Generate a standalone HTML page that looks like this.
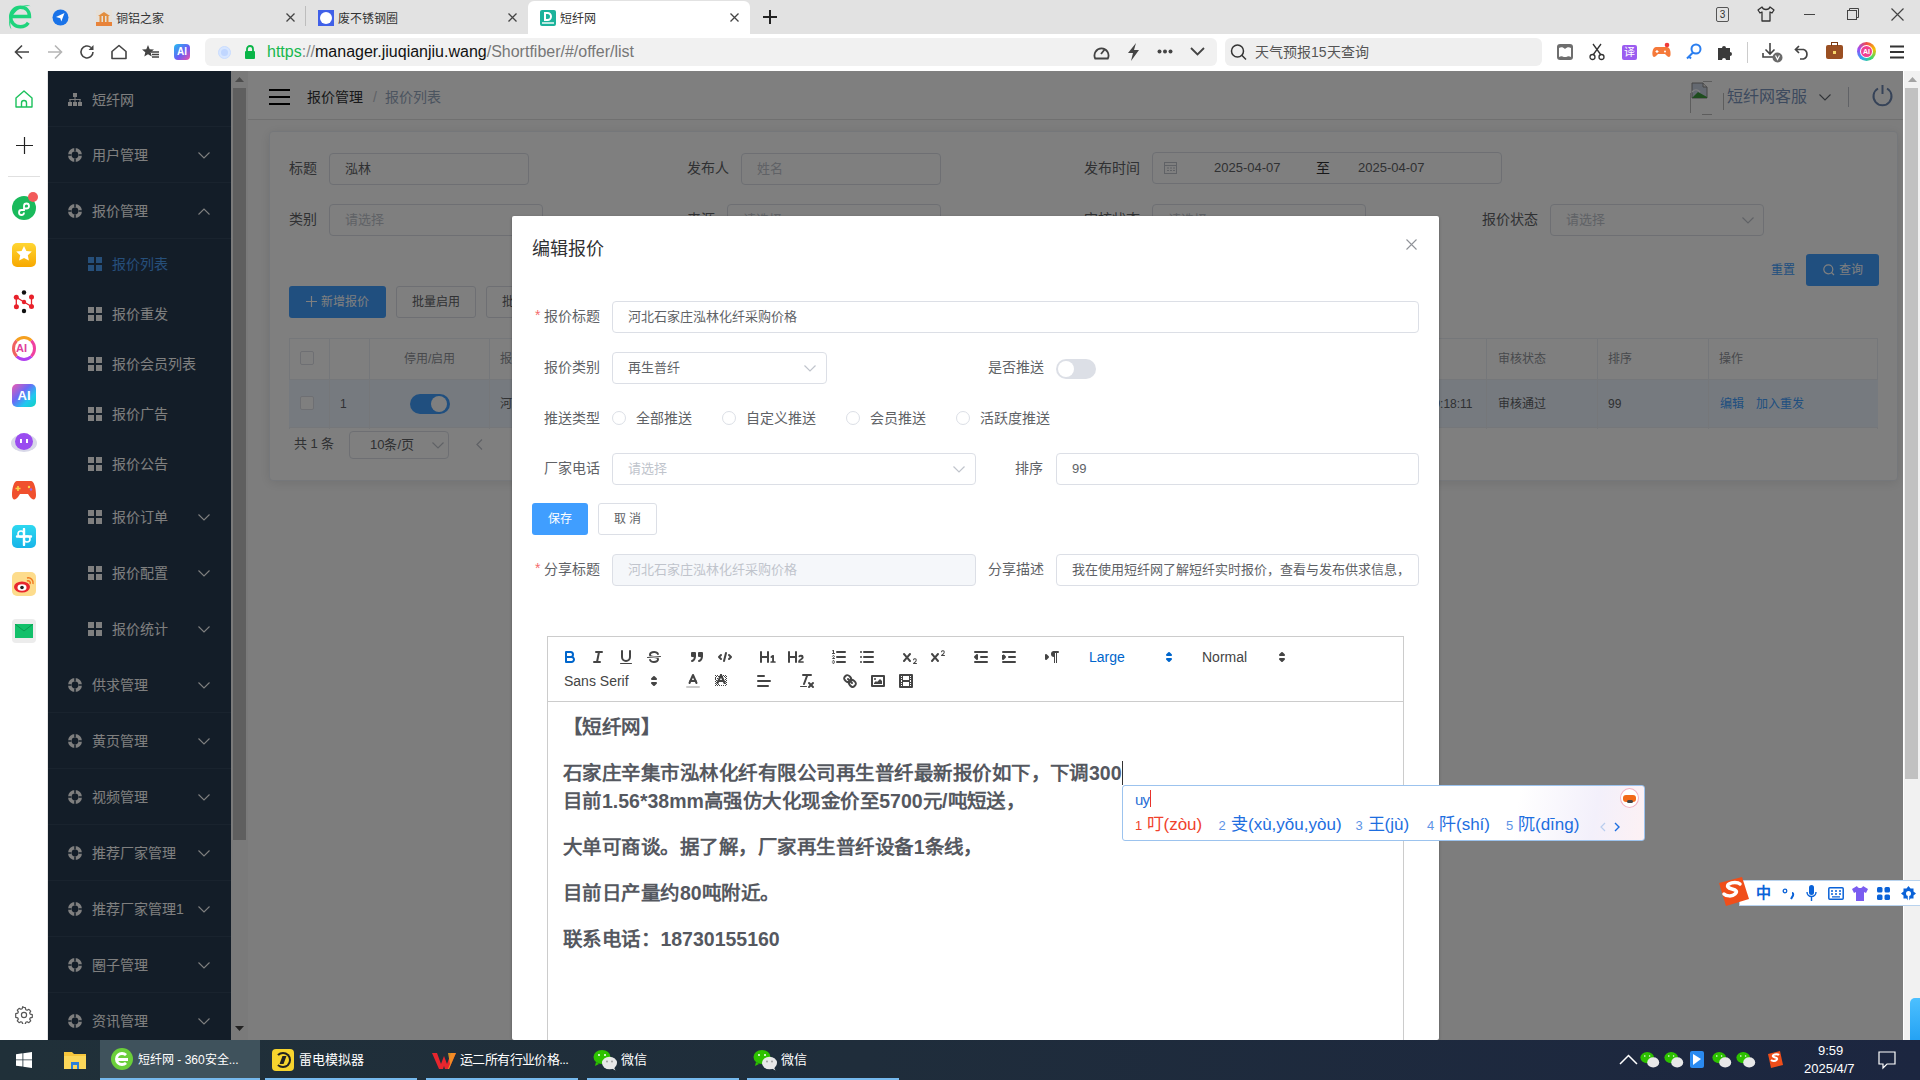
<!DOCTYPE html>
<html lang="zh-CN"><head><meta charset="utf-8">
<style>
*{box-sizing:border-box;margin:0;padding:0}
html,body{width:1920px;height:1080px;overflow:hidden;font-family:"Liberation Sans",sans-serif;background:#fff;position:relative}
.a{position:absolute}
/* tab bar */
#tabbar{left:0;top:0;width:1920px;height:34px;background:#e2e2e2}
.tab{top:3px;height:33px;font-size:13px;color:#333;line-height:33px}
#navbar{left:0;top:34px;width:1920px;height:37px;background:#fff}
#bside{left:0;top:71px;width:48px;height:969px;background:#fff}
#app{left:48px;top:71px;width:1855px;height:969px;background:#f0f2f5;overflow:hidden}
#aside{left:0;top:0;width:183px;height:969px;background:#263a50}
.ed{font-size:19.5px;line-height:28px;font-weight:bold;color:#55585f;white-space:nowrap;letter-spacing:-0.52px}
.mtxt{font-size:14px;line-height:20px;white-space:nowrap}
#asidescroll{left:183px;top:0;width:17px;height:969px;background:#f4f4f4}
#overlay{left:0;top:0;width:1855px;height:969px;background:rgba(0,0,0,.5)}
#pscroll{left:1903px;top:71px;width:17px;height:969px;background:#f1f1f1;border-left:1px solid #fff}
#modal{left:512px;top:216px;width:927px;height:824px;background:#fff;border-radius:2px;box-shadow:0 1px 3px rgba(0,0,0,.3);overflow:hidden}
#taskbar{left:0;top:1040px;width:1920px;height:40px;background:linear-gradient(90deg,#203039 0%,#1f2d3b 45%,#1c2640 100%)}
</style></head><body>
<div id="tabbar" class="a">
  <svg class="a" style="left:4px;top:3px" width="28" height="28" viewBox="0 0 28 28"><path d="M7 13.5h18.5c0-6-3.8-9.3-9-9.3-5.6 0-9.8 4-9.8 9.8 0 5.8 4 9.7 9.7 9.7 3.6 0 6.3-1.6 7.9-4" fill="none" stroke="#1ed47c" stroke-width="3.4"/><path d="M7.5 26.5C3 22 5 11 13 5.5 18 2 24 1.5 26.5 3.2 22.5 2.5 17 4 12.5 8 6.5 13.5 5 21 7.5 26.5z" fill="#1ed47c"/></svg>
  <svg class="a" style="left:52px;top:9px" width="17" height="17" viewBox="0 0 17 17"><circle cx="8.5" cy="8.5" r="8" fill="#1a73e8"/><path d="M4 8l8.5-4-3.2 8.5-1-3.3z" fill="#fff"/></svg>
  <div class="a" style="left:96px;top:10px;width:16px;height:16px;background:#e6e0d8"><svg width="16" height="16" viewBox="0 0 16 16"><path d="M2 6l6-4 6 4z" fill="#e38d3c"/><rect x="3.5" y="6" width="2" height="6" fill="#e38d3c"/><rect x="7" y="6" width="2" height="6" fill="#e38d3c"/><rect x="10.5" y="6" width="2" height="6" fill="#e38d3c"/><rect x="0" y="12" width="16" height="4" fill="#e8833a"/></svg></div>
  <div class="a tab" style="left:116px;font-size:12px;color:#333">铜铝之家</div>
  <svg class="a" style="left:286px;top:13px" width="9" height="9" viewBox="0 0 9 9"><path d="M.5.5l8 8M8.5.5l-8 8" stroke="#444" stroke-width="1.3"/></svg>
  <div class="a" style="left:305px;top:6px;width:1px;height:20px;background:#bdbdbd"></div>
  <div class="a" style="left:318px;top:10px;width:16px;height:16px;background:#4060e8"><div class="a" style="left:2px;top:2px;width:12px;height:12px;border-radius:50%;background:#fff"></div></div>
  <div class="a tab" style="left:338px;font-size:12px;color:#333">废不锈钢圈</div>
  <svg class="a" style="left:508px;top:13px" width="9" height="9" viewBox="0 0 9 9"><path d="M.5.5l8 8M8.5.5l-8 8" stroke="#444" stroke-width="1.3"/></svg>
  <div class="a" style="left:528px;top:1px;width:222px;height:34px;background:#fff;border-radius:6px 6px 0 0"></div>
  <div class="a" style="left:540px;top:10px;width:16px;height:16px;background:#1cb39b;border-radius:2px"><div class="a" style="left:4px;top:2px;width:8px;height:9px;border:2px solid #fff;border-radius:0 5px 5px 0"></div><div class="a" style="left:2px;top:12px;width:12px;height:2px;background:#fff;opacity:.7"></div></div>
  <div class="a tab" style="left:560px;font-size:12px;color:#333">短纤网</div>
  <svg class="a" style="left:730px;top:13px" width="9" height="9" viewBox="0 0 9 9"><path d="M.5.5l8 8M8.5.5l-8 8" stroke="#444" stroke-width="1.3"/></svg>
  <svg class="a" style="left:763px;top:10px" width="14" height="14" viewBox="0 0 14 14"><path d="M7 0v14M0 7h14" stroke="#222" stroke-width="2"/></svg>
  <div class="a" style="left:1716px;top:7px;width:13px;height:15px;border:1px solid #555;border-radius:2px;font-size:10px;line-height:13px;text-align:center;color:#333">3</div>
  <svg class="a" style="left:1757px;top:6px" width="18" height="16" viewBox="0 0 18 16"><path d="M5 1L1 4l2 3 2-1v9h8V6l2 1 2-3-4-3c-.5 1.5-2 2.5-4 2.5S5.5 2.5 5 1z" fill="none" stroke="#333" stroke-width="1.3" stroke-linejoin="round"/></svg>
  <div class="a" style="left:1804px;top:14px;width:11px;height:1px;background:#444"></div>
  <svg class="a" style="left:1847px;top:8px" width="12" height="12" viewBox="0 0 12 12"><rect x=".5" y="2.5" width="9" height="9" fill="none" stroke="#444"/><path d="M2.5 2.5V.5h9v9h-2" fill="none" stroke="#444"/></svg>
  <svg class="a" style="left:1891px;top:8px" width="13" height="13" viewBox="0 0 13 13"><path d="M.5.5l12 12M12.5.5l-12 12" stroke="#444" stroke-width="1.2"/></svg>
</div>
<div id="navbar" class="a">
  <svg class="a" style="left:14px;top:10px" width="16" height="16" viewBox="0 0 16 16"><path d="M15 8H1.5M8 1.5L1.5 8 8 14.5" fill="none" stroke="#444" stroke-width="1.6"/></svg>
  <svg class="a" style="left:47px;top:10px" width="16" height="16" viewBox="0 0 16 16"><path d="M1 8h13.5M8 1.5L14.5 8 8 14.5" fill="none" stroke="#b5b5b5" stroke-width="1.6"/></svg>
  <svg class="a" style="left:79px;top:10px" width="16" height="16" viewBox="0 0 16 16"><path d="M14 8a6 6 0 1 1-2-4.5" fill="none" stroke="#444" stroke-width="1.6"/><path d="M14.5 1v5h-5z" fill="#444"/></svg>
  <svg class="a" style="left:111px;top:10px" width="16" height="16" viewBox="0 0 16 16"><path d="M1 7.5L8 1.5l7 6V14.5H1z" fill="none" stroke="#444" stroke-width="1.6" stroke-linejoin="round"/></svg>
  <svg class="a" style="left:142px;top:10px" width="18" height="16" viewBox="0 0 18 16"><path d="M6 1l1.7 4.2 4.3.3-3.3 2.8 1 4.3L6 10.3 2.3 12.6l1-4.3L0 5.5l4.3-.3z" fill="#444"/><path d="M9 8h8M10 10.5h7M10 13h7" stroke="#444" stroke-width="1.4"/></svg>
  <div class="a" style="left:174px;top:10px;width:16px;height:16px;border-radius:4px;background:linear-gradient(135deg,#22c0f0,#6a5cf5 55%,#f04fa8);color:#fff;font-weight:bold;font-size:10px;line-height:16px;text-align:center">AI</div>
  <div class="a" style="left:205px;top:4px;width:1012px;height:28px;background:#f1f1f1;border-radius:6px"></div>
  <div class="a" style="left:218px;top:12px;width:13px;height:13px;border-radius:50%;border:1px solid #c9dcff;background:#d7e6ff"><div class="a" style="left:2px;top:2px;width:7px;height:7px;border-radius:50%;background:#c0d6ff"></div></div>
  <svg class="a" style="left:244px;top:11px" width="12" height="14" viewBox="0 0 12 14"><path d="M3 6V4a3 3 0 0 1 6 0v2" fill="none" stroke="#0ab548" stroke-width="1.8"/><rect x="1" y="6" width="10" height="8" rx="1" fill="#0ab548"/></svg>
  <div class="a" style="left:267px;top:8px;font-size:16px;line-height:20px;color:#333;white-space:nowrap"><span style="color:#17b84e">https</span><span style="color:#888">://</span><span style="color:#111">manager.jiuqianjiu.wang</span><span style="color:#777">/Shortfiber/#/offer/list</span></div>
  <svg class="a" style="left:1093px;top:10px" width="17" height="16" viewBox="0 0 17 16"><path d="M2.2 14.5A7 7 0 1 1 14.8 14.5z" fill="none" stroke="#444" stroke-width="1.8" stroke-linejoin="round"/><path d="M8 10l4-5" stroke="#444" stroke-width="1.8"/></svg>
  <svg class="a" style="left:1127px;top:9px" width="13" height="18" viewBox="0 0 13 18"><path d="M9 0L1 10h5l-2 8 8-11H7z" fill="#444"/></svg>
  <svg class="a" style="left:1157px;top:15px" width="16" height="5" viewBox="0 0 16 5"><circle cx="2.5" cy="2.5" r="2" fill="#444"/><circle cx="8" cy="2.5" r="2" fill="#444"/><circle cx="13.5" cy="2.5" r="2" fill="#444"/></svg>
  <svg class="a" style="left:1190px;top:13px" width="15" height="9" viewBox="0 0 15 9"><path d="M1 1l6.5 6.5L14 1" fill="none" stroke="#444" stroke-width="1.8"/></svg>
  <div class="a" style="left:1225px;top:4px;width:317px;height:28px;background:#efefef;border-radius:6px"></div>
  <svg class="a" style="left:1229px;top:9px" width="19" height="19" viewBox="0 0 19 19"><circle cx="8.5" cy="8" r="6" fill="none" stroke="#333" stroke-width="1.5"/><path d="M12.8 12.3L17 16.5" stroke="#333" stroke-width="1.5"/></svg>
  <div class="a" style="left:1255px;top:8px;font-size:14px;line-height:20px;color:#555;white-space:nowrap">天气预报15天查询</div>
  <div class="a" style="left:1557px;top:10px;width:16px;height:16px;border-radius:3px;background:#6e6e6e"><svg class="a" style="left:2px;top:3px" width="12" height="10" viewBox="0 0 12 10"><path d="M0 1c2-1 4-1 6 1 2-2 4-2 6-1v9c-2-1-4-1-6 1-2-2-4-2-6-1z" fill="#fff"/></svg></div>
  <svg class="a" style="left:1589px;top:9px" width="16" height="18" viewBox="0 0 16 18"><path d="M4 1l8 11M12 1L4 12" stroke="#333" stroke-width="1.3"/><circle cx="3.5" cy="14" r="2.5" fill="none" stroke="#333" stroke-width="1.3"/><circle cx="12.5" cy="14" r="2.5" fill="none" stroke="#333" stroke-width="1.3"/></svg>
  <div class="a" style="left:1622px;top:11px;width:15px;height:15px;border-radius:2px;background:#9b5cf0;color:#fff;font-size:11px;line-height:15px;text-align:center">译</div>
  <svg class="a" style="left:1652px;top:8px" width="19" height="18" viewBox="0 0 19 18"><path d="M4 5h11c2.5 0 4 4 3.5 8-.3 2.5-2.5 2.5-4 .5L13 12H6l-1.5 1.5c-1.5 2-3.7 2-4-.5C0 9 1.5 5 4 5z" fill="#f5793a"/><circle cx="15" cy="3" r="2.3" fill="#f03a3a"/><path d="M5 8v3M3.5 9.5h3" stroke="#fff" stroke-width="1.2"/><circle cx="13" cy="9.5" r="1" fill="#fff"/></svg>
  <svg class="a" style="left:1686px;top:9px" width="16" height="17" viewBox="0 0 16 17"><circle cx="10" cy="6" r="4.5" fill="none" stroke="#2a7ef0" stroke-width="2"/><path d="M7 9.5L1 15.5M3 13.5l2 2" stroke="#2a7ef0" stroke-width="2"/></svg>
  <svg class="a" style="left:1717px;top:10px" width="16" height="16" viewBox="0 0 16 16"><path d="M1 4h4a2 2 0 1 1 4 0h4v4a2 2 0 1 1 0 4v4H9a2 2 0 1 0-4 0H1z" fill="#3a3a3a"/></svg>
  <div class="a" style="left:1747px;top:8px;width:1px;height:21px;background:#ccc"></div>
  <svg class="a" style="left:1762px;top:8px" width="22" height="22" viewBox="0 0 22 22"><path d="M8 1v11M3.5 7.5L8 12l4.5-4.5M1 11v4h12" fill="none" stroke="#444" stroke-width="1.6"/><circle cx="15.5" cy="15.5" r="5" fill="#6a6a6a"/><path d="M13.5 13.5l2 4 2-4" fill="none" stroke="#fff" stroke-width="1.2"/></svg>
  <svg class="a" style="left:1794px;top:10px" width="16" height="16" viewBox="0 0 16 16"><path d="M5 2L1.5 5.5 5 9M1.5 5.5h8a5 5 0 0 1 0 9.5H6" fill="none" stroke="#444" stroke-width="1.7"/></svg>
  <div class="a" style="left:1826px;top:11px;width:17px;height:14px;border-radius:2px;background:#9a4f22"><div class="a" style="left:5px;top:-3px;width:7px;height:4px;border:1.5px solid #7a3a12;border-bottom:none"></div><div class="a" style="left:7px;top:6px;width:3px;height:3px;background:#f7d56a"></div></div>
  <div class="a" style="left:1857px;top:8px;width:19px;height:19px;border-radius:50%;background:conic-gradient(#f24b4b,#f5c000,#3ad96f,#2aa6f5,#a04bf5,#f24b4b)"><div class="a" style="left:3px;top:3px;width:13px;height:13px;border-radius:50%;background:#fff"></div><div class="a" style="left:4px;top:4px;width:11px;height:11px;border-radius:50%;background:#f04090;color:#fff;font-size:7px;line-height:11px;text-align:center;font-weight:bold">AI</div></div>
  <svg class="a" style="left:1890px;top:11px" width="14" height="14" viewBox="0 0 14 14"><path d="M0 1.5h14M0 7h14M0 12.5h14" stroke="#333" stroke-width="1.8"/></svg>
</div>
<div id="bside" class="a">
  <div class="a" style="left:47px;top:0;width:1px;height:969px;background:#e6e6e6"></div>
  <svg class="a" style="left:15px;top:19px" width="18" height="18" viewBox="0 0 18 18"><path d="M1 8L9 1l8 7v9H1z" fill="none" stroke="#1cc15c" stroke-width="1.4" stroke-linejoin="round"/><path d="M6.5 17v-4a2.5 2.5 0 0 1 5 0v4" fill="none" stroke="#1cc15c" stroke-width="1.4"/></svg>
  <svg class="a" style="left:16px;top:66px" width="17" height="17" viewBox="0 0 17 17"><path d="M8.5 0v17M0 8.5h17" stroke="#222" stroke-width="1.2"/></svg>
  <div class="a" style="left:8px;top:105px;width:32px;height:1px;background:#e0e0e0"></div>
  <div class="a" style="left:12px;top:125px;width:24px;height:24px;border-radius:50%;background:#1aba5c"></div>
  <svg class="a" style="left:15px;top:128px" width="18" height="18" viewBox="0 0 18 18"><path d="M6 12.5a2.5 2.5 0 1 1 -2.5-2.5h2.5v-4a2.5 2.5 0 1 1 2.5 2.5H6" fill="none" stroke="#fff" stroke-width="1.8" transform="translate(3,1)"/></svg>
  <div class="a" style="left:28px;top:121px;width:10px;height:10px;border-radius:50%;background:#f25b5b"></div>
  <div class="a" style="left:12px;top:172px;width:24px;height:24px;border-radius:5px;background:linear-gradient(#ffd633,#f7a800)"></div>
  <svg class="a" style="left:14px;top:173px" width="20" height="20" viewBox="0 0 20 20"><path d="M10 2l2.4 5 5.4.6-4 3.7 1.1 5.3L10 14l-4.9 2.6 1.1-5.3-4-3.7 5.4-.6z" fill="#fff"/></svg>
  <svg class="a" style="left:8px;top:214px" width="32" height="35" viewBox="0 0 32 35"><path d="M8.3 12.3v9.5M23.5 12v9.5M8.3 12.3L16 17l7.5 4.5" fill="none" stroke="#e8202a" stroke-width="1.3"/><circle cx="8.3" cy="12.3" r="2.5" fill="#e8202a"/><circle cx="8.4" cy="21.8" r="2.5" fill="#e8202a"/><circle cx="23.5" cy="12" r="2.5" fill="#e8202a"/><circle cx="23.5" cy="21.5" r="2.5" fill="#e8202a"/><circle cx="16" cy="17" r="2.2" fill="#e8202a"/><circle cx="16" cy="7.5" r="2.2" fill="#111"/><circle cx="16" cy="26" r="2.2" fill="#111"/></svg>
  <div class="a" style="left:12px;top:265px;width:24px;height:25px;border-radius:50%;border:3px solid;border-color:#f5a020 #f040a0 #b040f0 #f06060"></div>
  <div class="a" style="left:16px;top:270px;font-size:11px;font-weight:bold;color:#e0409a;line-height:14px">AI</div>
  <div class="a" style="left:12px;top:313px;width:24px;height:23px;border-radius:5px;background:linear-gradient(135deg,#f05ab0,#6a6af5 40%,#20c8f0 70%,#10d0c0);color:#fff;font-weight:bold;font-size:13px;line-height:23px;text-align:center">AI</div>
  <div class="a" style="left:11px;top:363px;width:26px;height:18px;border-radius:50%;background:#d8d8e8"></div>
  <div class="a" style="left:15px;top:362px;width:18px;height:17px;border-radius:50%;background:#9a4cf0"><div class="a" style="left:5px;top:6px;width:2px;height:4px;background:#fff"></div><div class="a" style="left:11px;top:6px;width:2px;height:4px;background:#fff"></div></div>
  <svg class="a" style="left:12px;top:409px" width="24" height="21" viewBox="0 0 24 21"><path d="M5 1h14c3 0 5 7 5 14 0 5-3 6-6 2l-2-3H8l-2 3c-3 4-6 3-6-2C0 8 2 1 5 1z" fill="#f0502e"/><path d="M6 6v5M3.5 8.5h5" stroke="#fbd34a" stroke-width="1.6"/><circle cx="17" cy="7" r="1.2" fill="#fbd34a"/><circle cx="19" cy="9.5" r="1.2" fill="#9b6cf0"/></svg>
  <div class="a" style="left:12px;top:454px;width:24px;height:23px;border-radius:5px;background:linear-gradient(#2ed8f0,#18b4e8)"></div>
  <svg class="a" style="left:15px;top:457px" width="18" height="18" viewBox="0 0 18 18"><path d="M9 1v16M2 8.5h14" stroke="#fff" stroke-width="2.4" stroke-linecap="round"/><circle cx="6" cy="6" r="3" fill="none" stroke="#fff" stroke-width="1.6"/><circle cx="12" cy="11" r="3" fill="none" stroke="#fff" stroke-width="1.6"/></svg>
  <div class="a" style="left:12px;top:501px;width:24px;height:24px;border-radius:5px;background:#fddc8c"></div>
  <svg class="a" style="left:13px;top:504px" width="22" height="19" viewBox="0 0 22 19"><ellipse cx="9" cy="12" rx="8" ry="5.5" fill="#e8262e"/><ellipse cx="9" cy="12.5" rx="4.5" ry="3.2" fill="#fff"/><circle cx="9" cy="12.5" r="1.8" fill="#222"/><path d="M14 3a5 5 0 0 1 6 6M14 6a2.2 2.2 0 0 1 3 3" fill="none" stroke="#f07820" stroke-width="1.5"/></svg>
  <div class="a" style="left:12px;top:548px;width:24px;height:24px;border-radius:4px;background:#ececec"></div>
  <div class="a" style="left:15px;top:553px;width:18px;height:14px;background:#12c06a"></div>
  <svg class="a" style="left:15px;top:553px" width="18" height="8" viewBox="0 0 18 8"><path d="M0 0l9 7 9-7" fill="none" stroke="#0a9a50" stroke-width="1"/></svg>
  <svg class="a" style="left:15px;top:935px" width="18" height="18" viewBox="0 0 18 18"><path d="M9 1.5l1.3.2.5 2 1.3.6 1.8-1 1.8 1.8-1 1.8.6 1.3 2 .5v2.6l-2 .5-.6 1.3 1 1.8-1.8 1.8-1.8-1-1.3.6-.5 2H7.7l-.5-2-1.3-.6-1.8 1-1.8-1.8 1-1.8-.6-1.3-2-.5V7.7l2-.5.6-1.3-1-1.8 1.8-1.8 1.8 1 1.3-.6.5-2z" fill="none" stroke="#555" stroke-width="1.2" stroke-linejoin="round"/><circle cx="9" cy="9" r="2.6" fill="none" stroke="#555" stroke-width="1.2"/></svg>
</div>
<div id="app" class="a">
  <div class="a" style="left:200px;top:0;width:1655px;height:969px;background:#fbfbfb"></div>
<div class="a" style="left:200px;top:0;width:1655px;height:49px;background:#fff;border-bottom:1px solid #e0e0e0"></div>
<svg class="a" style="left:221px;top:18px" width="21" height="16" viewBox="0 0 21 16"><path d="M0 1h21M0 8h21M0 15h21" stroke="#000" stroke-width="2"/></svg>
<div class="a mtxt" style="left:259px;top:16px;color:#303133">报价管理</div>
<div class="a mtxt" style="left:325px;top:16px;color:#c0c4cc">/</div>
<div class="a mtxt" style="left:337px;top:16px;color:#97a8be">报价列表</div>
<div class="a" style="left:1655px;top:10px;width:9px;height:1px;background:#bbb"></div><div class="a" style="left:1654px;top:43px;width:10px;height:1px;background:#bbb"></div><div class="a" style="left:1642px;top:22px;width:1px;height:20px;background:#bbb"></div><div class="a" style="left:1675px;top:22px;width:1px;height:17px;background:#bbb"></div><svg class="a" style="left:1643px;top:11px" width="18" height="17" viewBox="0 0 18 17"><path d="M1 1h11l4 4v11H1z" fill="#c9d3e3" stroke="#888" stroke-width="1"/><path d="M1 16l6-6 9 5v1z" fill="#3c9a3c"/><path d="M1 10c3-3 5-3 8 0" fill="none" stroke="#fff" stroke-width="1.2"/><path d="M12 1v4h4" fill="#eee" stroke="#888"/></svg>

<div class="a mtxt" style="left:1679px;top:15px;font-size:16px;line-height:22px;color:#7b94bc">短纤网客服</div>
<svg class="a" style="left:1771px;top:23px" width="12" height="7" viewBox="0 0 12 7"><path d="M.5.5L6 6 11.5.5" fill="none" stroke="#60666e" stroke-width="1.1"/></svg>
<div class="a" style="left:1800px;top:16px;width:1px;height:20px;background:#c0c4cc"></div>
<svg class="a" style="left:1823px;top:13px" width="23" height="23" viewBox="0 0 23 23"><path d="M7 4.5a9 9 0 1 0 9 0" fill="none" stroke="#6c86b0" stroke-width="2"/><path d="M11.5 1v9" stroke="#6c86b0" stroke-width="2"/></svg>
<div class="a" style="left:221px;top:60px;width:1629px;height:350px;background:#fff;border:1px solid #ebeef5;border-radius:4px;box-shadow:0 2px 12px 0 rgba(0,0,0,.1)"></div>
<div class="a mtxt" style="left:241px;top:87px;color:#606266;font-size:14px">标题</div>
<div class="a" style="left:281px;top:82px;width:200px;height:32px;border:1px solid #dcdfe6;border-radius:4px;background:#fff"><div class="a mtxt" style="left:15px;top:6px;color:#606266;font-size:13px;line-height:18px">泓林</div></div>
<div class="a mtxt" style="left:639px;top:87px;color:#606266;font-size:14px">发布人</div>
<div class="a" style="left:693px;top:82px;width:200px;height:32px;border:1px solid #dcdfe6;border-radius:4px;background:#fff"><div class="a mtxt" style="left:15px;top:6px;color:#c0c4cc;font-size:13px;line-height:18px">姓名</div></div>
<div class="a mtxt" style="left:1036px;top:87px;color:#606266;font-size:14px">发布时间</div>
<div class="a" style="left:1104px;top:81px;width:350px;height:32px;border:1px solid #dcdfe6;border-radius:4px;background:#fff"><svg class="a" style="left:11px;top:8px" width="13" height="13" viewBox="0 0 13 13"><rect x=".5" y="1.5" width="12" height="11" fill="none" stroke="#c0c4cc"/><path d="M.5 4.5h12M3 7h2M6 7h2M9 7h2M3 9.5h2M6 9.5h2M9 9.5h2" stroke="#c0c4cc"/></svg><div class="a mtxt" style="left:61px;top:6px;color:#606266;font-size:13px;line-height:18px">2025-04-07</div><div class="a mtxt" style="left:163px;top:5px;color:#303133">至</div><div class="a mtxt" style="left:205px;top:6px;color:#606266;font-size:13px;line-height:18px">2025-04-07</div></div>
<div class="a mtxt" style="left:241px;top:138px;color:#606266;font-size:14px">类别</div>
<div class="a" style="left:281px;top:133px;width:214px;height:32px;border:1px solid #dcdfe6;border-radius:4px;background:#fff"><div class="a mtxt" style="left:15px;top:6px;color:#c0c4cc;font-size:13px;line-height:18px">请选择</div><svg class="a" style="left:191px;top:12px" width="12" height="7" viewBox="0 0 12 7"><path d="M.5.5L6 6 11.5.5" fill="none" stroke="#c0c4cc" stroke-width="1.2"/></svg></div>
<div class="a mtxt" style="left:639px;top:138px;color:#606266;font-size:14px">来源</div>
<div class="a" style="left:679px;top:133px;width:214px;height:32px;border:1px solid #dcdfe6;border-radius:4px;background:#fff"><div class="a mtxt" style="left:15px;top:6px;color:#c0c4cc;font-size:13px;line-height:18px">请选择</div><svg class="a" style="left:191px;top:12px" width="12" height="7" viewBox="0 0 12 7"><path d="M.5.5L6 6 11.5.5" fill="none" stroke="#c0c4cc" stroke-width="1.2"/></svg></div>
<div class="a mtxt" style="left:1036px;top:138px;color:#606266;font-size:14px">审核状态</div>
<div class="a" style="left:1104px;top:133px;width:214px;height:32px;border:1px solid #dcdfe6;border-radius:4px;background:#fff"><div class="a mtxt" style="left:15px;top:6px;color:#c0c4cc;font-size:13px;line-height:18px">请选择</div><svg class="a" style="left:191px;top:12px" width="12" height="7" viewBox="0 0 12 7"><path d="M.5.5L6 6 11.5.5" fill="none" stroke="#c0c4cc" stroke-width="1.2"/></svg></div>
<div class="a mtxt" style="left:1434px;top:138px;color:#606266;font-size:14px">报价状态</div>
<div class="a" style="left:1502px;top:133px;width:214px;height:32px;border:1px solid #dcdfe6;border-radius:4px;background:#fff"><div class="a mtxt" style="left:15px;top:6px;color:#c0c4cc;font-size:13px;line-height:18px">请选择</div><svg class="a" style="left:191px;top:12px" width="12" height="7" viewBox="0 0 12 7"><path d="M.5.5L6 6 11.5.5" fill="none" stroke="#c0c4cc" stroke-width="1.2"/></svg></div>
<div class="a mtxt" style="left:1723px;top:189px;color:#409eff;font-size:12px">重置</div>
<div class="a" style="left:1758px;top:183px;width:73px;height:32px;background:#409eff;border-radius:3px"><svg class="a" style="left:17px;top:10px" width="12" height="12" viewBox="0 0 12 12"><circle cx="5.3" cy="5.3" r="4.5" fill="none" stroke="#fff" stroke-width="1.2"/><path d="M8.5 8.5l2.5 2.5" stroke="#fff" stroke-width="1.2"/></svg><div class="a mtxt" style="left:33px;top:6px;color:#fff;font-size:12px">查询</div></div>
<div class="a" style="left:241px;top:215px;width:97px;height:32px;background:#409eff;border-radius:3px"><svg class="a" style="left:17px;top:10px" width="11" height="11" viewBox="0 0 11 11"><path d="M5.5 0v11M0 5.5h11" stroke="#fff" stroke-width="1.2"/></svg><div class="a mtxt" style="left:32px;top:6px;color:#fff;font-size:12px">新增报价</div></div>
<div class="a" style="left:348px;top:215px;width:80px;height:32px;background:#fff;border:1px solid #dcdfe6;border-radius:3px"><div class="a mtxt" style="left:15px;top:5px;color:#606266;font-size:12px">批量启用</div></div>
<div class="a" style="left:438px;top:215px;width:80px;height:32px;background:#fff;border:1px solid #dcdfe6;border-radius:3px"><div class="a mtxt" style="left:15px;top:5px;color:#606266;font-size:12px">批量停用</div></div>
<div class="a" style="left:241px;top:267px;width:1589px;height:91px;border:1px solid #ebeef5;border-bottom:none;background:#fff"></div>
<div class="a" style="left:241px;top:308px;width:1589px;height:49px;background:#ecf5ff;border-top:1px solid #ebeef5;border-bottom:1px solid #ebeef5"></div>
<div class="a" style="left:281px;top:267px;width:1px;height:91px;background:#ebeef5"></div>
<div class="a" style="left:321px;top:267px;width:1px;height:91px;background:#ebeef5"></div>
<div class="a" style="left:441px;top:267px;width:1px;height:91px;background:#ebeef5"></div>
<div class="a" style="left:1438px;top:267px;width:1px;height:91px;background:#ebeef5"></div>
<div class="a" style="left:1549px;top:267px;width:1px;height:91px;background:#ebeef5"></div>
<div class="a" style="left:1660px;top:267px;width:1px;height:91px;background:#ebeef5"></div>
<div class="a" style="left:252px;top:280px;width:14px;height:14px;border:1px solid #dcdfe6;border-radius:2px;background:#fff"></div>
<div class="a" style="left:252px;top:325px;width:14px;height:14px;border:1px solid #dcdfe6;border-radius:2px;background:#fff"></div>
<div class="a mtxt" style="left:356px;top:278px;color:#909399;font-size:12px">停用/启用</div>
<div class="a mtxt" style="left:452px;top:278px;color:#909399;font-size:12px">报价标题</div>
<div class="a mtxt" style="left:292px;top:323px;color:#606266;font-size:12px">1</div>
<div class="a" style="left:362px;top:323px;width:40px;height:20px;border-radius:10px;background:#409eff"><div class="a" style="left:21px;top:2px;width:16px;height:16px;border-radius:50%;background:#fff"></div></div>
<div class="a mtxt" style="left:452px;top:323px;color:#606266;font-size:12px">河北石家庄泓林化纤采购价格</div>
<div class="a mtxt" style="left:1314px;top:323px;color:#606266;font-size:12px">2025-04-07 09:18:11</div>
<div class="a mtxt" style="left:1450px;top:278px;color:#909399;font-size:12px">审核状态</div>
<div class="a mtxt" style="left:1560px;top:278px;color:#909399;font-size:12px">排序</div>
<div class="a mtxt" style="left:1671px;top:278px;color:#909399;font-size:12px">操作</div>
<div class="a mtxt" style="left:1450px;top:323px;color:#606266;font-size:12px">审核通过</div>
<div class="a mtxt" style="left:1560px;top:323px;color:#606266;font-size:12px">99</div>
<div class="a mtxt" style="left:1672px;top:323px;color:#409eff;font-size:12px">编辑</div>
<div class="a mtxt" style="left:1708px;top:323px;color:#409eff;font-size:12px">加入重发</div>
<div class="a mtxt" style="left:246px;top:363px;color:#606266;font-size:13px">共 1 条</div>
<div class="a" style="left:301px;top:360px;width:100px;height:28px;border:1px solid #dcdfe6;border-radius:4px;background:#fff"><div class="a mtxt" style="left:20px;top:3px;color:#606266;font-size:13px">10条/页</div><svg class="a" style="left:82px;top:10px" width="12" height="7" viewBox="0 0 12 7"><path d="M.5.5L6 6 11.5.5" fill="none" stroke="#c0c4cc" stroke-width="1.2"/></svg></div>
<svg class="a" style="left:428px;top:368px" width="7" height="11" viewBox="0 0 7 11"><path d="M6 .5L1 5.5 6 10.5" fill="none" stroke="#c0c4cc" stroke-width="1.3"/></svg>
<div id="aside" class="a"><svg class="a" style="left:20px;top:22px" width="14" height="13" viewBox="0 0 14 13" fill="#fff"><rect x="5" y="0" width="4" height="4"/><rect x="6.5" y="4" width="1" height="2.5"/><rect x="1.5" y="6" width="11" height="1"/><rect x="1.5" y="6" width="1" height="3"/><rect x="11.5" y="6" width="1" height="3"/><rect x="0" y="9" width="4" height="4"/><rect x="5" y="9" width="4" height="4"/><rect x="10" y="9" width="4" height="4"/><rect x="6.5" y="6" width="1" height="3"/></svg>
<div class="a mtxt" style="left:44px;top:19px;color:#fff">短纤网</div>
<div class="a" style="left:0;top:55px;width:183px;height:1px;background:#33465c"></div>
<div class="a" style="left:0;top:111px;width:183px;height:1px;background:#33465c"></div>
<div class="a" style="left:0;top:167px;width:183px;height:1px;background:#33465c"></div>
<div class="a" style="left:0;top:641px;width:183px;height:1px;background:#33465c"></div>
<div class="a" style="left:0;top:697px;width:183px;height:1px;background:#33465c"></div>
<div class="a" style="left:0;top:753px;width:183px;height:1px;background:#33465c"></div>
<div class="a" style="left:0;top:809px;width:183px;height:1px;background:#33465c"></div>
<div class="a" style="left:0;top:865px;width:183px;height:1px;background:#33465c"></div>
<div class="a" style="left:0;top:921px;width:183px;height:1px;background:#33465c"></div>
<svg class="a" style="left:20px;top:77px" width="14" height="14" viewBox="0 0 14 14"><circle cx="7" cy="7" r="5.2" fill="none" stroke="#fff" stroke-width="3.6"/><path d="M7 0v3.4M7 10.6V14M0 7h3.4M10.6 7H14" stroke="#263a50" stroke-width="1.5"/></svg>
<div class="a mtxt" style="left:44px;top:74px;color:#fff">用户管理</div>
<svg class="a" style="left:150px;top:81px" width="12" height="7" viewBox="0 0 12 7"><path d="M.5.5L6 6 11.5.5" fill="none" stroke="#fff" stroke-width="1.1"/></svg>
<svg class="a" style="left:20px;top:133px" width="14" height="14" viewBox="0 0 14 14"><circle cx="7" cy="7" r="5.2" fill="none" stroke="#fff" stroke-width="3.6"/><path d="M7 0v3.4M7 10.6V14M0 7h3.4M10.6 7H14" stroke="#263a50" stroke-width="1.5"/></svg>
<div class="a mtxt" style="left:44px;top:130px;color:#fff">报价管理</div>
<svg class="a" style="left:150px;top:137px" width="12" height="7" viewBox="0 0 12 7"><path d="M.5 6.5L6 1l5.5 5.5" fill="none" stroke="#fff" stroke-width="1.1"/></svg>
<svg class="a" style="left:40px;top:186px" width="14" height="14" viewBox="0 0 14 14" fill="#4d9ef5"><rect x="0" y="0" width="6" height="6"/><rect x="8" y="0" width="6" height="6"/><rect x="0" y="8" width="6" height="6"/><rect x="8" y="8" width="6" height="6"/></svg>
<div class="a mtxt" style="left:64px;top:183px;color:#4d9ef5">报价列表</div>
<svg class="a" style="left:40px;top:236px" width="14" height="14" viewBox="0 0 14 14" fill="#fff"><rect x="0" y="0" width="6" height="6"/><rect x="8" y="0" width="6" height="6"/><rect x="0" y="8" width="6" height="6"/><rect x="8" y="8" width="6" height="6"/></svg>
<div class="a mtxt" style="left:64px;top:233px;color:#fff">报价重发</div>
<svg class="a" style="left:40px;top:286px" width="14" height="14" viewBox="0 0 14 14" fill="#fff"><rect x="0" y="0" width="6" height="6"/><rect x="8" y="0" width="6" height="6"/><rect x="0" y="8" width="6" height="6"/><rect x="8" y="8" width="6" height="6"/></svg>
<div class="a mtxt" style="left:64px;top:283px;color:#fff">报价会员列表</div>
<svg class="a" style="left:40px;top:336px" width="14" height="14" viewBox="0 0 14 14" fill="#fff"><rect x="0" y="0" width="6" height="6"/><rect x="8" y="0" width="6" height="6"/><rect x="0" y="8" width="6" height="6"/><rect x="8" y="8" width="6" height="6"/></svg>
<div class="a mtxt" style="left:64px;top:333px;color:#fff">报价广告</div>
<svg class="a" style="left:40px;top:386px" width="14" height="14" viewBox="0 0 14 14" fill="#fff"><rect x="0" y="0" width="6" height="6"/><rect x="8" y="0" width="6" height="6"/><rect x="0" y="8" width="6" height="6"/><rect x="8" y="8" width="6" height="6"/></svg>
<div class="a mtxt" style="left:64px;top:383px;color:#fff">报价公告</div>
<svg class="a" style="left:40px;top:439px" width="14" height="14" viewBox="0 0 14 14" fill="#fff"><rect x="0" y="0" width="6" height="6"/><rect x="8" y="0" width="6" height="6"/><rect x="0" y="8" width="6" height="6"/><rect x="8" y="8" width="6" height="6"/></svg>
<div class="a mtxt" style="left:64px;top:436px;color:#fff">报价订单</div>
<svg class="a" style="left:150px;top:443px" width="12" height="7" viewBox="0 0 12 7"><path d="M.5.5L6 6 11.5.5" fill="none" stroke="#fff" stroke-width="1.1"/></svg>
<svg class="a" style="left:40px;top:495px" width="14" height="14" viewBox="0 0 14 14" fill="#fff"><rect x="0" y="0" width="6" height="6"/><rect x="8" y="0" width="6" height="6"/><rect x="0" y="8" width="6" height="6"/><rect x="8" y="8" width="6" height="6"/></svg>
<div class="a mtxt" style="left:64px;top:492px;color:#fff">报价配置</div>
<svg class="a" style="left:150px;top:499px" width="12" height="7" viewBox="0 0 12 7"><path d="M.5.5L6 6 11.5.5" fill="none" stroke="#fff" stroke-width="1.1"/></svg>
<svg class="a" style="left:40px;top:551px" width="14" height="14" viewBox="0 0 14 14" fill="#fff"><rect x="0" y="0" width="6" height="6"/><rect x="8" y="0" width="6" height="6"/><rect x="0" y="8" width="6" height="6"/><rect x="8" y="8" width="6" height="6"/></svg>
<div class="a mtxt" style="left:64px;top:548px;color:#fff">报价统计</div>
<svg class="a" style="left:150px;top:555px" width="12" height="7" viewBox="0 0 12 7"><path d="M.5.5L6 6 11.5.5" fill="none" stroke="#fff" stroke-width="1.1"/></svg>
<svg class="a" style="left:20px;top:607px" width="14" height="14" viewBox="0 0 14 14"><circle cx="7" cy="7" r="5.2" fill="none" stroke="#fff" stroke-width="3.6"/><path d="M7 0v3.4M7 10.6V14M0 7h3.4M10.6 7H14" stroke="#263a50" stroke-width="1.5"/></svg>
<div class="a mtxt" style="left:44px;top:604px;color:#fff">供求管理</div>
<svg class="a" style="left:150px;top:611px" width="12" height="7" viewBox="0 0 12 7"><path d="M.5.5L6 6 11.5.5" fill="none" stroke="#fff" stroke-width="1.1"/></svg>
<svg class="a" style="left:20px;top:663px" width="14" height="14" viewBox="0 0 14 14"><circle cx="7" cy="7" r="5.2" fill="none" stroke="#fff" stroke-width="3.6"/><path d="M7 0v3.4M7 10.6V14M0 7h3.4M10.6 7H14" stroke="#263a50" stroke-width="1.5"/></svg>
<div class="a mtxt" style="left:44px;top:660px;color:#fff">黄页管理</div>
<svg class="a" style="left:150px;top:667px" width="12" height="7" viewBox="0 0 12 7"><path d="M.5.5L6 6 11.5.5" fill="none" stroke="#fff" stroke-width="1.1"/></svg>
<svg class="a" style="left:20px;top:719px" width="14" height="14" viewBox="0 0 14 14"><circle cx="7" cy="7" r="5.2" fill="none" stroke="#fff" stroke-width="3.6"/><path d="M7 0v3.4M7 10.6V14M0 7h3.4M10.6 7H14" stroke="#263a50" stroke-width="1.5"/></svg>
<div class="a mtxt" style="left:44px;top:716px;color:#fff">视频管理</div>
<svg class="a" style="left:150px;top:723px" width="12" height="7" viewBox="0 0 12 7"><path d="M.5.5L6 6 11.5.5" fill="none" stroke="#fff" stroke-width="1.1"/></svg>
<svg class="a" style="left:20px;top:775px" width="14" height="14" viewBox="0 0 14 14"><circle cx="7" cy="7" r="5.2" fill="none" stroke="#fff" stroke-width="3.6"/><path d="M7 0v3.4M7 10.6V14M0 7h3.4M10.6 7H14" stroke="#263a50" stroke-width="1.5"/></svg>
<div class="a mtxt" style="left:44px;top:772px;color:#fff">推荐厂家管理</div>
<svg class="a" style="left:150px;top:779px" width="12" height="7" viewBox="0 0 12 7"><path d="M.5.5L6 6 11.5.5" fill="none" stroke="#fff" stroke-width="1.1"/></svg>
<svg class="a" style="left:20px;top:831px" width="14" height="14" viewBox="0 0 14 14"><circle cx="7" cy="7" r="5.2" fill="none" stroke="#fff" stroke-width="3.6"/><path d="M7 0v3.4M7 10.6V14M0 7h3.4M10.6 7H14" stroke="#263a50" stroke-width="1.5"/></svg>
<div class="a mtxt" style="left:44px;top:828px;color:#fff">推荐厂家管理1</div>
<svg class="a" style="left:150px;top:835px" width="12" height="7" viewBox="0 0 12 7"><path d="M.5.5L6 6 11.5.5" fill="none" stroke="#fff" stroke-width="1.1"/></svg>
<svg class="a" style="left:20px;top:887px" width="14" height="14" viewBox="0 0 14 14"><circle cx="7" cy="7" r="5.2" fill="none" stroke="#fff" stroke-width="3.6"/><path d="M7 0v3.4M7 10.6V14M0 7h3.4M10.6 7H14" stroke="#263a50" stroke-width="1.5"/></svg>
<div class="a mtxt" style="left:44px;top:884px;color:#fff">圈子管理</div>
<svg class="a" style="left:150px;top:891px" width="12" height="7" viewBox="0 0 12 7"><path d="M.5.5L6 6 11.5.5" fill="none" stroke="#fff" stroke-width="1.1"/></svg>
<svg class="a" style="left:20px;top:943px" width="14" height="14" viewBox="0 0 14 14"><circle cx="7" cy="7" r="5.2" fill="none" stroke="#fff" stroke-width="3.6"/><path d="M7 0v3.4M7 10.6V14M0 7h3.4M10.6 7H14" stroke="#263a50" stroke-width="1.5"/></svg>
<div class="a mtxt" style="left:44px;top:940px;color:#fff">资讯管理</div>
<svg class="a" style="left:150px;top:947px" width="12" height="7" viewBox="0 0 12 7"><path d="M.5.5L6 6 11.5.5" fill="none" stroke="#fff" stroke-width="1.1"/></svg></div>
  <div id="asidescroll" class="a"><svg class="a" style="left:4px;top:6px" width="9" height="5" viewBox="0 0 9 5"><path d="M0 5L4.5 0 9 5z" fill="#999"/></svg><div class="a" style="left:2px;top:17px;width:13px;height:752px;background:#bfbfbf"></div><svg class="a" style="left:4px;top:955px" width="9" height="5" viewBox="0 0 9 5"><path d="M0 0h9L4.5 5z" fill="#444"/></svg></div>
  <div id="overlay" class="a"></div>
</div>
<div id="pscroll" class="a"><svg class="a" style="left:4px;top:6px" width="9" height="5" viewBox="0 0 9 5"><path d="M0 5L4.5 0 9 5z" fill="#a3a3a3"/></svg><div class="a" style="left:1px;top:17px;width:13px;height:691px;background:#c1c1c1"></div></div>
<div id="modal" class="a"><div class="a mtxt" style="left:20px;top:21px;color:#303133;font-size:18px;line-height:24px;">编辑报价</div>
<svg class="a" style="left:894px;top:23px" width="11" height="11" viewBox="0 0 11 11"><path d="M.5.5l10 10M10.5.5l-10 10" stroke="#909399" stroke-width="1.1"/></svg>
<div class="a" style="left:23px;top:92px;font-size:14px;line-height:14px;color:#f56c6c">*</div>
<div class="a mtxt" style="left:32px;top:90px;color:#606266;font-size:14px;">报价标题</div>
<div class="a" style="left:100px;top:85px;width:807px;height:32px;border:1px solid #dcdfe6;border-radius:4px;background:#fff"><div class="a mtxt" style="left:15px;top:6px;color:#606266;font-size:13px;line-height:18px">河北石家庄泓林化纤采购价格</div></div>
<div class="a mtxt" style="left:32px;top:141px;color:#606266;font-size:14px;">报价类别</div>
<div class="a" style="left:100px;top:136px;width:215px;height:32px;border:1px solid #dcdfe6;border-radius:4px;background:#fff"><div class="a mtxt" style="left:15px;top:6px;color:#606266;font-size:13px;line-height:18px">再生普纤</div><svg class="a" style="left:191px;top:12px" width="12" height="7" viewBox="0 0 12 7"><path d="M.5.5L6 6 11.5.5" fill="none" stroke="#c0c4cc" stroke-width="1.2"/></svg></div>
<div class="a mtxt" style="left:476px;top:141px;color:#606266;font-size:14px;">是否推送</div>
<div class="a" style="left:544px;top:143px;width:40px;height:20px;border-radius:10px;background:#dcdfe6"><div class="a" style="left:2px;top:2px;width:16px;height:16px;border-radius:50%;background:#fff"></div></div>
<div class="a mtxt" style="left:32px;top:192px;color:#606266;font-size:14px;">推送类型</div>
<div class="a" style="left:100px;top:195px;width:14px;height:14px;border-radius:50%;border:1px solid #dcdfe6;background:#fff"></div>
<div class="a mtxt" style="left:124px;top:192px;color:#606266;font-size:14px;">全部推送</div>
<div class="a" style="left:210px;top:195px;width:14px;height:14px;border-radius:50%;border:1px solid #dcdfe6;background:#fff"></div>
<div class="a mtxt" style="left:234px;top:192px;color:#606266;font-size:14px;">自定义推送</div>
<div class="a" style="left:334px;top:195px;width:14px;height:14px;border-radius:50%;border:1px solid #dcdfe6;background:#fff"></div>
<div class="a mtxt" style="left:358px;top:192px;color:#606266;font-size:14px;">会员推送</div>
<div class="a" style="left:444px;top:195px;width:14px;height:14px;border-radius:50%;border:1px solid #dcdfe6;background:#fff"></div>
<div class="a mtxt" style="left:468px;top:192px;color:#606266;font-size:14px;">活跃度推送</div>
<div class="a mtxt" style="left:32px;top:242px;color:#606266;font-size:14px;">厂家电话</div>
<div class="a" style="left:100px;top:237px;width:364px;height:32px;border:1px solid #dcdfe6;border-radius:4px;background:#fff"><div class="a mtxt" style="left:15px;top:6px;color:#c0c4cc;font-size:13px;line-height:18px">请选择</div><svg class="a" style="left:340px;top:12px" width="12" height="7" viewBox="0 0 12 7"><path d="M.5.5L6 6 11.5.5" fill="none" stroke="#c0c4cc" stroke-width="1.2"/></svg></div>
<div class="a mtxt" style="left:503px;top:242px;color:#606266;font-size:14px;">排序</div>
<div class="a" style="left:544px;top:237px;width:363px;height:32px;border:1px solid #dcdfe6;border-radius:4px;background:#fff"><div class="a mtxt" style="left:15px;top:6px;color:#606266;font-size:13px;line-height:18px">99</div></div>
<div class="a" style="left:20px;top:287px;width:56px;height:32px;border-radius:3px;background:#409eff"><div class="a mtxt" style="left:16px;top:6px;color:#fff;font-size:12px">保存</div></div>
<div class="a" style="left:86px;top:287px;width:59px;height:32px;border-radius:3px;border:1px solid #dcdfe6;background:#fff"><div class="a mtxt" style="left:15px;top:5px;color:#606266;font-size:12px">取 消</div></div>
<div class="a" style="left:23px;top:345px;font-size:14px;line-height:14px;color:#f56c6c">*</div>
<div class="a mtxt" style="left:32px;top:343px;color:#606266;font-size:14px;">分享标题</div>
<div class="a" style="left:100px;top:338px;width:364px;height:32px;border:1px solid #dcdfe6;border-radius:4px;background:#f5f7fa"><div class="a mtxt" style="left:15px;top:6px;color:#c0c4cc;font-size:13px;line-height:18px">河北石家庄泓林化纤采购价格</div></div>
<div class="a mtxt" style="left:476px;top:343px;color:#606266;font-size:14px;">分享描述</div>
<div class="a" style="left:544px;top:338px;width:363px;height:32px;border:1px solid #dcdfe6;border-radius:4px;background:#fff;overflow:hidden"><div class="a mtxt" style="left:15px;top:6px;color:#606266;font-size:13px;line-height:18px">我在使用短纤网了解短纤实时报价，查看与发布供求信息，</div></div>
<div class="a" style="left:35px;top:420px;width:857px;height:66px;border:1px solid #ccc"></div>
<div class="a" style="left:35px;top:485px;width:857px;height:400px;border:1px solid #ccc;border-top:none"></div>
<svg class="a" style="left:49px;top:432px" width="18" height="18" viewBox="0 0 18 18"><path fill="none" stroke="#06c" stroke-width="2" stroke-linecap="round" stroke-linejoin="round" d="M5,4H9.5A2.5,2.5,0,0,1,12,6.5v0A2.5,2.5,0,0,1,9.5,9H5A0,0,0,0,1,5,9V4A0,0,0,0,1,5,4Z"/><path fill="none" stroke="#06c" stroke-width="2" stroke-linecap="round" stroke-linejoin="round" d="M5,9h5.5A2.5,2.5,0,0,1,13,11.5v0A2.5,2.5,0,0,1,10.5,14H5a0,0,0,0,1,0,0V9A0,0,0,0,1,5,9Z"/></svg>
<svg class="a" style="left:77px;top:432px" width="18" height="18" viewBox="0 0 18 18"><line fill="none" stroke="#444" stroke-width="2" stroke-linecap="round" stroke-linejoin="round" x1="7" x2="13" y1="4" y2="4"/><line fill="none" stroke="#444" stroke-width="2" stroke-linecap="round" stroke-linejoin="round" x1="5" x2="11" y1="14" y2="14"/><line fill="none" stroke="#444" stroke-width="2" stroke-linecap="round" stroke-linejoin="round" x1="8" x2="10" y1="14" y2="4"/></svg>
<svg class="a" style="left:105px;top:432px" width="18" height="18" viewBox="0 0 18 18"><path fill="none" stroke="#444" stroke-width="2" stroke-linecap="round" stroke-linejoin="round" d="M5,3V9a4.012,4.012,0,0,0,4,4H9a4.012,4.012,0,0,0,4-4V3"/><rect fill="#444" height="1" rx="0.5" ry="0.5" width="12" x="3" y="15"/></svg>
<svg class="a" style="left:133px;top:432px" width="18" height="18" viewBox="0 0 18 18"><line fill="none" stroke="#444" stroke-width="1" stroke-linecap="round" stroke-linejoin="round" x1="15.5" x2="2.5" y1="8.5" y2="9.5"/><path fill="#444" d="M9.007,8C6.542,7.791,6,7.519,6,6.5,6,5.792,7.283,5,9,5c1.571,0,2.765.679,2.969,1.309a1,1,0,0,0,1.9-.617C13.356,4.106,11.354,3,9,3,6.2,3,4,4.538,4,6.5a3.2,3.2,0,0,0,.5,1.843Z"/><path fill="#444" d="M8.984,10C11.457,10.208,12,10.479,12,11.5c0,.708-1.283,1.5-3,1.5-1.571,0-2.765-.679-2.969-1.309a1,1,0,1,0-1.9.617C4.644,13.894,6.646,15,9,15c2.8,0,5-1.538,5-3.5a3.2,3.2,0,0,0-.5-1.843Z"/></svg>
<svg class="a" style="left:176px;top:432px" width="18" height="18" viewBox="0 0 18 18"><rect fill="#444" stroke="#444" stroke-width="2" stroke-linejoin="round" height="3" width="3" x="4" y="5"/><rect fill="#444" stroke="#444" stroke-width="2" stroke-linejoin="round" height="3" width="3" x="11" y="5"/><path fill="none" stroke="#444" stroke-width="2" stroke-linecap="round" d="M7,8c0,4.031-3,5-3,5"/><path fill="none" stroke="#444" stroke-width="2" stroke-linecap="round" d="M14,8c0,4.031-3,5-3,5"/></svg>
<svg class="a" style="left:204px;top:432px" width="18" height="18" viewBox="0 0 18 18"><polyline fill="none" stroke="#444" stroke-width="2" stroke-linecap="round" stroke-linejoin="round" points="5 7 3 9 5 11"/><polyline fill="none" stroke="#444" stroke-width="2" stroke-linecap="round" stroke-linejoin="round" points="13 7 15 9 13 11"/><line fill="none" stroke="#444" stroke-width="2" stroke-linecap="round" stroke-linejoin="round" x1="10" x2="8" y1="5" y2="13"/></svg>
<svg class="a" style="left:247px;top:432px" width="18" height="18" viewBox="0 0 18 18"><path fill="#444" d="M10,4V14a1,1,0,0,1-2,0V10H3v4a1,1,0,0,1-2,0V4A1,1,0,0,1,3,4V8H8V4a1,1,0,0,1,2,0Zm6.06787,9.209H14.98975V7.59863a.54085.54085,0,0,0-.605-.60547h-.62744a1.01119,1.01119,0,0,0-.748.29688L11.645,8.56641a.5435.5435,0,0,0-.022.8584l.28613.30762a.53861.53861,0,0,0,.84717.0332l.09912-.08789a1.2137,1.2137,0,0,0,.2417-.35254h.02246s-.01123.30859-.01123.60547V13.209H12.041a.54085.54085,0,0,0-.605.60547v.43945a.54085.54085,0,0,0,.605.60547h4.02686a.54085.54085,0,0,0,.605-.60547v-.43945A.54085.54085,0,0,0,16.06787,13.209Z"/></svg>
<svg class="a" style="left:275px;top:432px" width="18" height="18" viewBox="0 0 18 18"><path fill="#444" d="M16.73975,13.81445v.43945a.54085.54085,0,0,1-.605.60547H11.855a.58392.58392,0,0,1-.64893-.60547V14.0127c0-2.90527,3.39941-3.42187,3.39941-4.55469a.77675.77675,0,0,0-.84717-.78125,1.17684,1.17684,0,0,0-.83594.38477c-.2749.26367-.561.374-.85791.13184l-.4292-.34082c-.30811-.24219-.38525-.51758-.1543-.81445a2.97155,2.97155,0,0,1,2.45361-1.17676,2.45393,2.45393,0,0,1,2.68408,2.40918c0,2.45312-3.1792,2.92676-3.27832,3.93848h2.79443A.54085.54085,0,0,1,16.73975,13.81445ZM9,3A.99974.99974,0,0,0,8,4V8H3V4A1,1,0,0,0,1,4V14a1,1,0,0,0,2,0V10H8v4a1,1,0,0,0,2,0V4A.99974.99974,0,0,0,9,3Z"/></svg>
<svg class="a" style="left:318px;top:432px" width="18" height="18" viewBox="0 0 18 18"><line fill="none" stroke="#444" stroke-width="2" stroke-linecap="round" stroke-linejoin="round" x1="7" x2="15" y1="4" y2="4"/><line fill="none" stroke="#444" stroke-width="2" stroke-linecap="round" stroke-linejoin="round" x1="7" x2="15" y1="9" y2="9"/><line fill="none" stroke="#444" stroke-width="2" stroke-linecap="round" stroke-linejoin="round" x1="7" x2="15" y1="14" y2="14"/><line fill="none" stroke="#444" stroke-width="1" stroke-linecap="round" stroke-linejoin="round" x1="2.5" x2="4.5" y1="5.5" y2="5.5"/><path fill="#444" d="M3.5,6A0.5,0.5,0,0,1,3,5.5V3.085l-0.276.138A0.5,0.5,0,0,1,2.053,3c-0.124-.247-0.023-0.324.224-0.447l1-.5A0.5,0.5,0,0,1,4,2.5v3A0.5,0.5,0,0,1,3.5,6Z"/><path fill="none" stroke="#444" stroke-width="1" stroke-linecap="round" stroke-linejoin="round" d="M4.5,10.5h-2c0-.234,1.85-1.076,1.85-2.234A0.959,0.959,0,0,0,2.5,8.156"/><path fill="none" stroke="#444" stroke-width="1" stroke-linecap="round" stroke-linejoin="round" d="M2.5,14.846a0.959,0.959,0,0,0,1.85-.109A0.7,0.7,0,0,0,3.75,14a0.688,0.688,0,0,0,.6-0.736,0.959,0.959,0,0,0-1.85-.109"/></svg>
<svg class="a" style="left:346px;top:432px" width="18" height="18" viewBox="0 0 18 18"><line fill="none" stroke="#444" stroke-width="2" stroke-linecap="round" stroke-linejoin="round" x1="6" x2="15" y1="4" y2="4"/><line fill="none" stroke="#444" stroke-width="2" stroke-linecap="round" stroke-linejoin="round" x1="6" x2="15" y1="9" y2="9"/><line fill="none" stroke="#444" stroke-width="2" stroke-linecap="round" stroke-linejoin="round" x1="6" x2="15" y1="14" y2="14"/><line fill="none" stroke="#444" stroke-width="2" stroke-linecap="round" stroke-linejoin="round" x1="3" x2="3" y1="4" y2="4"/><line fill="none" stroke="#444" stroke-width="2" stroke-linecap="round" stroke-linejoin="round" x1="3" x2="3" y1="9" y2="9"/><line fill="none" stroke="#444" stroke-width="2" stroke-linecap="round" stroke-linejoin="round" x1="3" x2="3" y1="14" y2="14"/></svg>
<svg class="a" style="left:389px;top:432px" width="18" height="18" viewBox="0 0 18 18"><path fill="#444" d="M15.5,15H13.861a3.858,3.858,0,0,0,1.914-2.975,1.8,1.8,0,0,0-1.6-1.751A1.921,1.921,0,0,0,12.021,11.7a0.50013,0.50013,0,1,0,.957.291h0a0.914,0.914,0,0,1,1.053-.725,0.81,0.81,0,0,1,.744.762c0,1.076-1.16971,1.86982-1.93971,2.43082A1.45639,1.45639,0,0,0,12,15.5a0.5,0.5,0,0,0,.5.5h3A0.5,0.5,0,0,0,15.5,15Z"/><path fill="#444" d="M9.65,5.241a1,1,0,0,0-1.409.108L6,7.964,3.759,5.349A1,1,0,0,0,2.192,6.59178Q2.21541,6.6213,2.241,6.649L4.684,9.5,2.241,12.35A1,1,0,0,0,3.71,13.70722q0.02557-.02768.049-0.05722L6,11.036,8.241,13.65a1,1,0,1,0,1.567-1.24277Q9.78459,12.3777,9.759,12.35L7.316,9.5,9.759,6.651A1,1,0,0,0,9.65,5.241Z"/></svg>
<svg class="a" style="left:417px;top:432px" width="18" height="18" viewBox="0 0 18 18"><path fill="#444" d="M15.5,7H13.861a4.015,4.015,0,0,0,1.914-2.975,1.8,1.8,0,0,0-1.6-1.751A1.922,1.922,0,0,0,12.021,3.7a0.5,0.5,0,1,0,.957.291,0.917,0.917,0,0,1,1.053-.725,0.81,0.81,0,0,1,.744.762c0,1.077-1.164,1.925-1.934,2.486A1.423,1.423,0,0,0,12,7.5a0.5,0.5,0,0,0,.5.5h3A0.5,0.5,0,0,0,15.5,7Z"/><path fill="#444" d="M9.651,5.241a1,1,0,0,0-1.41.108L6,7.964,3.759,5.349a1,1,0,1,0-1.519,1.3L4.683,9.5,2.241,12.35a1,1,0,1,0,1.519,1.3L6,11.036,8.241,13.65a1,1,0,0,0,1.519-1.3L7.317,9.5,9.759,6.651A1,1,0,0,0,9.651,5.241Z"/></svg>
<svg class="a" style="left:460px;top:432px" width="18" height="18" viewBox="0 0 18 18"><line fill="none" stroke="#444" stroke-width="2" stroke-linecap="round" stroke-linejoin="round" x1="3" x2="15" y1="14" y2="14"/><line fill="none" stroke="#444" stroke-width="2" stroke-linecap="round" stroke-linejoin="round" x1="3" x2="15" y1="4" y2="4"/><line fill="none" stroke="#444" stroke-width="2" stroke-linecap="round" stroke-linejoin="round" x1="9" x2="15" y1="9" y2="9"/><polyline fill="none" stroke="#444" stroke-width="2" stroke-linecap="round" stroke-linejoin="round" points="5 7 5 11 3 9 5 7"/></svg>
<svg class="a" style="left:488px;top:432px" width="18" height="18" viewBox="0 0 18 18"><line fill="none" stroke="#444" stroke-width="2" stroke-linecap="round" stroke-linejoin="round" x1="3" x2="15" y1="14" y2="14"/><line fill="none" stroke="#444" stroke-width="2" stroke-linecap="round" stroke-linejoin="round" x1="3" x2="15" y1="4" y2="4"/><line fill="none" stroke="#444" stroke-width="2" stroke-linecap="round" stroke-linejoin="round" x1="9" x2="15" y1="9" y2="9"/><polyline fill="#444" stroke="#444" stroke-width="2" stroke-linejoin="round" points="3 7 3 11 5 9 3 7"/></svg>
<svg class="a" style="left:531px;top:432px" width="18" height="18" viewBox="0 0 18 18"><polygon fill="#444" stroke="#444" stroke-width="2" stroke-linejoin="round" points="3 11 5 9 3 7 3 11"/><line fill="none" stroke="#444" stroke-width="2" stroke-linecap="round" stroke-linejoin="round" x1="15" x2="11" y1="4" y2="4"/><path fill="#444" d="M11,3a3,3,0,0,0,0,6h1V3H11Z"/><rect fill="#444" height="11" width="1" x="11" y="4"/><rect fill="#444" height="11" width="1" x="13" y="4"/></svg>
<svg class="a" style="left:172px;top:456px" width="18" height="18" viewBox="0 0 18 18"><line fill="none" stroke="#ccc" stroke-width="2" stroke-linecap="round" x1="3" x2="15" y1="15" y2="15"/><polyline fill="none" stroke="#444" stroke-width="2" stroke-linecap="round" stroke-linejoin="round" points="5.5 11 9 3 12.5 11"/><line fill="none" stroke="#444" stroke-width="2" stroke-linecap="round" stroke-linejoin="round" x1="11.63" x2="6.38" y1="9" y2="9"/></svg>
<svg class="a" style="left:200px;top:456px" width="18" height="18" viewBox="0 0 18 18"><g fill="#444"><polygon points="6 6.868 6 6 5 6 5 7 5.942 7 6 6.868"/><polygon points="4 7 4 6 3 6 3 7 4 7"/><polygon points="11.007 6 11 6 11 7 11.929 7 11.007 6"/><polygon points="3 5 3 6 4 6 4 5 3 5"/><polygon points="4 4 5 4 5 5 4 5"/><polygon points="7 4 8 4 8 5 7 5"/><polygon points="5 3 6 3 6 4 5 4"/><polygon points="9 3 10 3 10 4 9 4"/><polygon points="11 3 12 3 12 4 11 4"/><polygon points="13 3 14 3 14 4 13 4"/><polygon points="3 3 4 3 4 4 3 4"/><polygon points="6 4 7 4 7 5 6 5"/><polygon points="10 4 11 4 11 5 10 5"/><polygon points="12 4 13 4 13 5 12 5"/><polygon points="14 4 15 4 15 5 14 5"/><polygon points="13 5 14 5 14 6 13 6"/><polygon points="14 6 15 6 15 7 14 7"/><polygon points="13 7 14 7 14 8 13 8"/><polygon points="14 8 15 8 15 9 14 9"/><polygon points="3 9 4 9 4 10 3 10"/><polygon points="3 11 4 11 4 12 3 12"/><polygon points="4 10 5 10 5 11 4 11"/><polygon points="13 9 14 9 14 10 13 10"/><polygon points="14 10 15 10 15 11 14 11"/><polygon points="13 11 14 11 14 12 13 12"/><polygon points="14 12 15 12 15 13 14 13"/><polygon points="3 13 4 13 4 14 3 14"/><polygon points="4 12 5 12 5 13 4 13"/><polygon points="5 13 6 13 6 14 5 14"/><polygon points="6 12 7 12 7 13 6 13"/><polygon points="7 13 8 13 8 14 7 14"/><polygon points="9 13 10 13 10 14 9 14"/><polygon points="11 13 12 13 12 14 11 14"/><polygon points="13 13 14 13 14 14 13 14"/><polygon points="3 7 4 7 4 8 3 8"/><polygon points="4 8 5 8 5 9 4 9"/></g><line fill="none" stroke="#444" stroke-width="2" stroke-linecap="round" stroke-linejoin="round" x1="5.5" x2="9" y1="11" y2="3"/><line fill="none" stroke="#444" stroke-width="2" stroke-linecap="round" stroke-linejoin="round" x1="12.5" x2="9" y1="11" y2="3"/><line fill="none" stroke="#444" stroke-width="2" stroke-linecap="round" stroke-linejoin="round" x1="11.63" x2="6.38" y1="9" y2="9"/></svg>
<svg class="a" style="left:243px;top:456px" width="18" height="18" viewBox="0 0 18 18"><line fill="none" stroke="#444" stroke-width="2" stroke-linecap="round" stroke-linejoin="round" x1="3" x2="15" y1="9" y2="9"/><line fill="none" stroke="#444" stroke-width="2" stroke-linecap="round" stroke-linejoin="round" x1="3" x2="13" y1="14" y2="14"/><line fill="none" stroke="#444" stroke-width="2" stroke-linecap="round" stroke-linejoin="round" x1="3" x2="9" y1="4" y2="4"/></svg>
<svg class="a" style="left:286px;top:456px" width="18" height="18" viewBox="0 0 18 18"><line fill="none" stroke="#444" stroke-width="2" stroke-linecap="round" stroke-linejoin="round" x1="5" x2="13" y1="3" y2="3"/><line fill="none" stroke="#444" stroke-width="2" stroke-linecap="round" stroke-linejoin="round" x1="6" x2="9.35" y1="12" y2="3"/><line fill="none" stroke="#444" stroke-width="2" stroke-linecap="round" stroke-linejoin="round" x1="11" x2="15" y1="11" y2="15"/><line fill="none" stroke="#444" stroke-width="2" stroke-linecap="round" stroke-linejoin="round" x1="15" x2="11" y1="11" y2="15"/><rect fill="#444" height="1" rx="0.5" ry="0.5" width="7" x="2" y="14"/></svg>
<svg class="a" style="left:329px;top:456px" width="18" height="18" viewBox="0 0 18 18"><line fill="none" stroke="#444" stroke-width="2" stroke-linecap="round" stroke-linejoin="round" x1="7" x2="11" y1="7" y2="11"/><path fill="none" stroke="#444" stroke-width="2" stroke-linecap="round" stroke-linejoin="round" d="M8.9,4.577a3.476,3.476,0,0,1,.36,4.679A3.476,3.476,0,0,1,4.577,8.9C3.185,7.5,2.035,6.4,4.217,4.217S7.5,3.185,8.9,4.577Z"/><path fill="none" stroke="#444" stroke-width="2" stroke-linecap="round" stroke-linejoin="round" d="M13.423,9.1a3.476,3.476,0,0,0-4.679-.36,3.476,3.476,0,0,0,.36,4.679c1.392,1.392,2.5,2.542,4.679.36S14.815,10.5,13.423,9.1Z"/></svg>
<svg class="a" style="left:357px;top:456px" width="18" height="18" viewBox="0 0 18 18"><rect fill="none" stroke="#444" stroke-width="2" stroke-linecap="round" stroke-linejoin="round" height="10" width="12" x="3" y="4"/><circle fill="#444" cx="6" cy="7" r="1"/><polyline fill="#444" points="5 12 5 11 7 9 8 10 11 7 13 9 13 12 5 12"/></svg>
<svg class="a" style="left:385px;top:456px" width="18" height="18" viewBox="0 0 18 18"><rect fill="none" stroke="#444" stroke-width="2" stroke-linecap="round" stroke-linejoin="round" height="12" width="12" x="3" y="3"/><rect fill="#444" height="12" width="1" x="5" y="3"/><rect fill="#444" height="12" width="1" x="12" y="3"/><rect fill="#444" height="2" width="8" x="5" y="8"/><rect fill="#444" height="1" width="3" x="3" y="5"/><rect fill="#444" height="1" width="3" x="3" y="7"/><rect fill="#444" height="1" width="3" x="3" y="10"/><rect fill="#444" height="1" width="3" x="3" y="12"/><rect fill="#444" height="1" width="3" x="12" y="5"/><rect fill="#444" height="1" width="3" x="12" y="7"/><rect fill="#444" height="1" width="3" x="12" y="10"/><rect fill="#444" height="1" width="3" x="12" y="12"/></svg>
<div class="a" style="left:577px;top:431px;font-size:14px;line-height:20px;color:#06c;white-space:nowrap">Large</div><svg class="a" style="left:648px;top:432px" width="18" height="18" viewBox="0 0 18 18"><polygon fill="none" stroke="#06c" stroke-width="2" stroke-linejoin="round" points="7 11 9 13 11 11 7 11"/><polygon fill="none" stroke="#06c" stroke-width="2" stroke-linejoin="round" points="7 7 9 5 11 7 7 7"/></svg>
<div class="a" style="left:690px;top:431px;font-size:14px;line-height:20px;color:#444;white-space:nowrap">Normal</div><svg class="a" style="left:761px;top:432px" width="18" height="18" viewBox="0 0 18 18"><polygon fill="none" stroke="#444" stroke-width="2" stroke-linejoin="round" points="7 11 9 13 11 11 7 11"/><polygon fill="none" stroke="#444" stroke-width="2" stroke-linejoin="round" points="7 7 9 5 11 7 7 7"/></svg>
<div class="a" style="left:52px;top:455px;font-size:14px;line-height:20px;color:#444;white-space:nowrap">Sans Serif</div><svg class="a" style="left:133px;top:456px" width="18" height="18" viewBox="0 0 18 18"><polygon fill="none" stroke="#444" stroke-width="2" stroke-linejoin="round" points="7 11 9 13 11 11 7 11"/><polygon fill="none" stroke="#444" stroke-width="2" stroke-linejoin="round" points="7 7 9 5 11 7 7 7"/></svg>
<div class="a ed" style="left:51px;top:497px">【短纤网】</div>
<div class="a ed" style="left:51px;top:543px">石家庄辛集市泓林化纤有限公司再生普纤最新报价如下，下调<span style="letter-spacing:0">300</span></div>
<div class="a" style="left:610px;top:545px;width:1px;height:24px;background:#333"></div>
<div class="a ed" style="left:51px;top:571px">目前<span style="letter-spacing:0">1.56*38mm</span>高强仿大化现金价至<span style="letter-spacing:0">5700</span>元<span style="letter-spacing:0">/</span>吨短送，</div>
<div class="a ed" style="left:51px;top:617px">大单可商谈。据了解，厂家再生普纤设备<span style="letter-spacing:0">1</span>条线，</div>
<div class="a ed" style="left:51px;top:663px">目前日产量约<span style="letter-spacing:0">80</span>吨附近。</div>
<div class="a ed" style="left:51px;top:709px">联系电话：<span style="letter-spacing:0">18730155160</span></div>
</div>
<div id="ime" class="a" style="left:1122px;top:785px;width:523px;height:56px;border:1px solid #9cc3ee;border-radius:3px;background:linear-gradient(100deg,#fff 75%,#f3f0fb 90%,#fdf1f4)">
  <div class="a" style="left:12px;top:3px;font-size:15px;line-height:22px;color:#2a6fd6;letter-spacing:-0.8px">uy</div>
  <div class="a" style="left:27px;top:4px;width:1px;height:17px;background:#e8332c"></div>
  <div class="a" style="left:12.0px;top:31px;font-size:13px;line-height:18px;color:#f0422c">1</div><div class="a" style="left:23.5px;top:28px;font-size:17px;line-height:22px;color:#f0422c;white-space:nowrap">叮(zòu)</div><div class="a" style="left:95.5px;top:31px;font-size:13px;line-height:18px;color:#5d94e6">2</div><div class="a" style="left:108.0px;top:28px;font-size:17px;line-height:22px;color:#1d6ee0;white-space:nowrap">叏(xù,yǒu,yòu)</div><div class="a" style="left:232.5px;top:31px;font-size:13px;line-height:18px;color:#5d94e6">3</div><div class="a" style="left:244.5px;top:28px;font-size:17px;line-height:22px;color:#1d6ee0;white-space:nowrap">王(jù)</div><div class="a" style="left:304.0px;top:31px;font-size:13px;line-height:18px;color:#5d94e6">4</div><div class="a" style="left:316.0px;top:28px;font-size:17px;line-height:22px;color:#1d6ee0;white-space:nowrap">阡(shí)</div><div class="a" style="left:383.0px;top:31px;font-size:13px;line-height:18px;color:#5d94e6">5</div><div class="a" style="left:395.0px;top:28px;font-size:17px;line-height:22px;color:#1d6ee0;white-space:nowrap">阢(dīng)</div>
  <svg class="a" style="left:477px;top:36px" width="6" height="10" viewBox="0 0 6 10"><path d="M5 1L1 5l4 4" fill="none" stroke="#b9cdee" stroke-width="1.2"/></svg>
  <svg class="a" style="left:491px;top:36px" width="6" height="10" viewBox="0 0 6 10"><path d="M1 1l4 4-4 4" fill="none" stroke="#1d6ee0" stroke-width="1.4"/></svg>
  <div class="a" style="left:497px;top:2px;width:19px;height:20px;border-radius:50%;border:1px solid #f3b3c3;background:#fff"><div class="a" style="left:2px;top:6px;width:13px;height:7px;border-radius:3px;background:#f26a18"></div><div class="a" style="left:6px;top:11px;width:6px;height:3px;border-radius:2px;background:#444"></div></div>
</div>
<div id="sogou" class="a" style="left:1739px;top:880px;width:181px;height:26px;background:#fff;border:1px solid #b9d3ee;border-right:none">
  <div class="a" style="left:16px;top:3px;font-size:15px;line-height:18px;font-weight:bold;color:#0a62d8">中</div>
  <svg class="a" style="left:42px;top:6px" width="13" height="14" viewBox="0 0 13 14"><circle cx="3" cy="4" r="1.8" fill="none" stroke="#0a62d8" stroke-width="1.3"/><path d="M10 6c1 0 1.5 1 1 2.5L9 12" fill="none" stroke="#0a62d8" stroke-width="2"/></svg>
  <svg class="a" style="left:66px;top:4px" width="11" height="17" viewBox="0 0 11 17"><rect x="3" y="0" width="5" height="10" rx="2.5" fill="#0a62d8"/><path d="M1 7a4.5 4.5 0 0 0 9 0M5.5 12v4" fill="none" stroke="#0a62d8" stroke-width="1.4"/></svg>
  <svg class="a" style="left:88px;top:6px" width="16" height="13" viewBox="0 0 16 13"><rect x=".8" y=".8" width="14.4" height="11.4" rx="1" fill="none" stroke="#0a62d8" stroke-width="1.5"/><path d="M3 4h2M7 4h2M11 4h2M3 7h2M7 7h2M11 7h2M4 9.8h8" stroke="#0a62d8" stroke-width="1.3"/></svg>
  <svg class="a" style="left:112px;top:5px" width="16" height="15" viewBox="0 0 16 15"><path d="M5 0L0 3l2 4 2-1v9h8V6l2 1 2-4-5-3c-.5 1.5-1.5 2-3 2S5.5 1.5 5 0z" fill="#7a5cf0"/></svg>
  <svg class="a" style="left:137px;top:6px" width="13" height="13" viewBox="0 0 13 13" fill="#0a62d8"><rect x="0" y="0" width="5.5" height="5.5" rx="1.5"/><rect x="7.5" y="0" width="5.5" height="5.5" rx="1.5"/><rect x="0" y="7.5" width="5.5" height="5.5" rx="1.5"/><rect x="7.5" y="7.5" width="5.5" height="5.5" rx="1.5"/></svg>
  <svg class="a" style="left:161px;top:5px" width="15" height="15" viewBox="0 0 15 15"><path d="M7.5 0l2 2.5h3v3l2.5 2-2.5 2v3h-3l-2 2.5-2-2.5h-3v-3L0 7.5l2.5-2v-3h3z" fill="#0a62d8"/><circle cx="7.5" cy="7.5" r="2.5" fill="#fff"/><path d="M7.5 8v7" stroke="#fff" stroke-width="1.5"/></svg>
</div>
<svg class="a" style="left:1717px;top:876px" width="33" height="31" viewBox="0 0 33 31"><path d="M2 7L25 1l7 22-23 7z" fill="#f04e1a"/><path d="M23 8c-2-2-8-2-11 0s-1 4 3 5 6 2 3 5-9 2-11 0" fill="none" stroke="#fff" stroke-width="3.5" stroke-linecap="round"/></svg>
<div class="a" style="left:1910px;top:998px;width:10px;height:48px;border-radius:5px 0 0 5px;background:linear-gradient(#4cc0ff,#1f9ef2)"></div>
<div id="taskbar" class="a">
  <svg class="a" style="left:16px;top:12px" width="16" height="16" viewBox="0 0 16 16" fill="#fff"><path d="M0 2.2l6.5-.9v6.2H0zM7.3 1.2L16 0v7.5H7.3zM0 8.3h6.5v6.3L0 13.8zM7.3 8.3H16V16l-8.7-1.2z"/></svg>
  <svg class="a" style="left:64px;top:11px" width="22" height="18" viewBox="0 0 22 18"><path d="M0 1h8l2 2h12v15H0z" fill="#f7c63c"/><path d="M0 5h22v13H0z" fill="#fbd75a"/><rect x="7" y="11" width="8" height="7" fill="#2b7fd8"/><rect x="9" y="14" width="4" height="4" fill="#fbd75a"/></svg>
  <div class="a" style="left:100px;top:0;width:160px;height:40px;background:#3f525c"></div>
  <div class="a" style="left:100px;top:38px;width:160px;height:2px;background:#76b9ed"></div>
  <div class="a" style="left:111px;top:8px;width:22px;height:22px;border-radius:50%;background:#6bcf3a"><div class="a" style="left:4px;top:4px;width:14px;height:14px;border-radius:50%;border:3px solid #fff;border-right-color:transparent"></div><div class="a" style="left:6px;top:10px;width:11px;height:2.5px;background:#fff"></div></div>
  <div class="a" style="left:138px;top:10px;font-size:12px;line-height:20px;color:#fff;white-space:nowrap">短纤网 - 360安全...</div>
  <div class="a" style="left:265px;top:38px;width:152px;height:2px;background:#76b9ed"></div>
  <div class="a" style="left:272px;top:9px;width:22px;height:22px;border-radius:4px;background:#f7d42e"><div class="a" style="left:3px;top:3px;width:16px;height:16px;border-radius:50%;border:2.5px solid #222;border-left-color:transparent"></div><div class="a" style="left:9px;top:7px;width:4px;height:8px;background:#222;transform:skewX(-20deg)"></div></div>
  <div class="a" style="left:299px;top:10px;font-size:13px;line-height:20px;color:#fff;white-space:nowrap">雷电模拟器</div>
  <div class="a" style="left:426px;top:38px;width:152px;height:2px;background:#76b9ed"></div>
  <svg class="a" style="left:432px;top:11px" width="24" height="19" viewBox="0 0 24 19"><path d="M0 2h5l4 11 3-8 3 8 4-11h5l-7 16h-4l-1-3-1 3H7z" fill="#e8262e"/><path d="M16 2h8l-7 16h-1l2-5z" fill="#f5a623" opacity=".8"/></svg>
  <div class="a" style="left:460px;top:10px;font-size:13px;line-height:20px;color:#fff;white-space:nowrap;letter-spacing:-0.6px">运二所有行业价格...</div>
  <div class="a" style="left:587px;top:38px;width:152px;height:2px;background:#76b9ed"></div>
  <div class="a" style="left:747px;top:38px;width:152px;height:2px;background:#76b9ed"></div>
  <svg class="a" style="left:593px;top:9px" width="25" height="22" viewBox="0 0 25 22"><ellipse cx="9" cy="8" rx="8.5" ry="7" fill="#2dc100"/><path d="M3 13l-1 4 4-2z" fill="#2dc100"/><ellipse cx="16.5" cy="14" rx="7.5" ry="6.3" fill="#e8e8e8"/><path d="M21 18.5l1.5 3-3.5-2z" fill="#e8e8e8"/><circle cx="6" cy="6" r="1" fill="#fff"/><circle cx="12" cy="6" r="1" fill="#fff"/><circle cx="14" cy="12.5" r=".9" fill="#999"/><circle cx="19" cy="12.5" r=".9" fill="#999"/></svg><svg class="a" style="left:753px;top:9px" width="25" height="22" viewBox="0 0 25 22"><ellipse cx="9" cy="8" rx="8.5" ry="7" fill="#2dc100"/><path d="M3 13l-1 4 4-2z" fill="#2dc100"/><ellipse cx="16.5" cy="14" rx="7.5" ry="6.3" fill="#e8e8e8"/><path d="M21 18.5l1.5 3-3.5-2z" fill="#e8e8e8"/><circle cx="6" cy="6" r="1" fill="#fff"/><circle cx="12" cy="6" r="1" fill="#fff"/><circle cx="14" cy="12.5" r=".9" fill="#999"/><circle cx="19" cy="12.5" r=".9" fill="#999"/></svg>
  <div class="a" style="left:621px;top:10px;font-size:13px;line-height:20px;color:#fff">微信</div>
  <div class="a" style="left:781px;top:10px;font-size:13px;line-height:20px;color:#fff">微信</div>
  <svg class="a" style="left:1619px;top:14px" width="19" height="11" viewBox="0 0 19 11"><path d="M1 10L9.5 1.5 18 10" fill="none" stroke="#fff" stroke-width="1.5"/></svg>
  <svg class="a" style="left:1640px;top:11px" width="20" height="18" viewBox="0 0 25 22"><ellipse cx="9" cy="8" rx="8.5" ry="7" fill="#2dc100"/><ellipse cx="16.5" cy="14" rx="7.5" ry="6.3" fill="#e8e8e8"/><circle cx="6" cy="6" r="1" fill="#fff"/><circle cx="12" cy="6" r="1" fill="#fff"/></svg><svg class="a" style="left:1664px;top:11px" width="20" height="18" viewBox="0 0 25 22"><ellipse cx="9" cy="8" rx="8.5" ry="7" fill="#2dc100"/><ellipse cx="16.5" cy="14" rx="7.5" ry="6.3" fill="#e8e8e8"/><circle cx="6" cy="6" r="1" fill="#fff"/><circle cx="12" cy="6" r="1" fill="#fff"/></svg><svg class="a" style="left:1712px;top:11px" width="20" height="18" viewBox="0 0 25 22"><ellipse cx="9" cy="8" rx="8.5" ry="7" fill="#2dc100"/><ellipse cx="16.5" cy="14" rx="7.5" ry="6.3" fill="#e8e8e8"/><circle cx="6" cy="6" r="1" fill="#fff"/><circle cx="12" cy="6" r="1" fill="#fff"/></svg><svg class="a" style="left:1736px;top:11px" width="20" height="18" viewBox="0 0 25 22"><ellipse cx="9" cy="8" rx="8.5" ry="7" fill="#2dc100"/><ellipse cx="16.5" cy="14" rx="7.5" ry="6.3" fill="#e8e8e8"/><circle cx="6" cy="6" r="1" fill="#fff"/><circle cx="12" cy="6" r="1" fill="#fff"/></svg>
  <div class="a" style="left:1690px;top:11px;width:14px;height:17px;border-radius:2px;background:#2a8af0"><svg class="a" style="left:3px;top:3px" width="8" height="11" viewBox="0 0 8 11"><path d="M0 0l8 5-8 6z" fill="#fff"/></svg></div>
  <svg class="a" style="left:1767px;top:10px" width="17" height="19" viewBox="0 0 17 19"><path d="M1 4L13 1l3 14-12 3z" fill="#f04e1a"/><path d="M12 5c-1-1-4-1-5.5 0s-.5 2 1.5 2.5 3 1 1.5 2.5-4.5 1-5.5 0" fill="none" stroke="#fff" stroke-width="2"/></svg>
  <div class="a" style="left:1818px;top:2px;font-size:13px;line-height:18px;color:#fff">9:59</div>
  <div class="a" style="left:1804px;top:20px;font-size:13px;line-height:18px;color:#fff">2025/4/7</div>
  <svg class="a" style="left:1878px;top:11px" width="18" height="19" viewBox="0 0 18 19"><path d="M1 1h16v12H9l-4 4v-4H1z" fill="none" stroke="#fff" stroke-width="1.2"/></svg>
</div>
</body></html>
